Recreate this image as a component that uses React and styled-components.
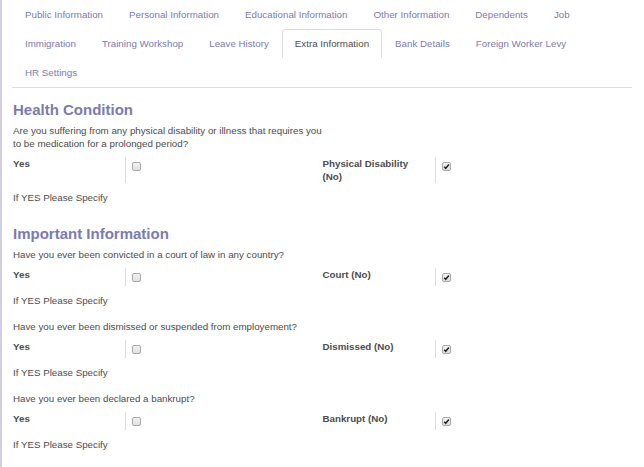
import React from "react";
import styled, { createGlobalStyle } from "styled-components";

const GlobalStyle = createGlobalStyle`
  html, body { margin: 0; padding: 0; background: #fff; }
  body {
    font-family: "Liberation Sans", Arial, sans-serif;
    font-size: 9.75px;
    color: #4c4c4c;
  }
  * { box-sizing: border-box; }
`;

const Page = styled.div`
  border-left: 2px solid #d2cee2;
  min-height: 467px;
  padding: 0 12px 0 11px;
`;

const Nav = styled.ul`
  display: flex;
  flex-wrap: wrap;
  list-style: none;
  margin: 0 0 12px -1px;
  padding: 0;
  border-bottom: 1px solid #dddddd;
`;

const Tab = styled.li`
  padding: 7px 12px;
  line-height: 13px;
  border: 1px solid ${(p) => (p.$active ? "#dddddd" : "transparent")};
  border-bottom-color: transparent;
  border-radius: 3px 3px 0 0;
  color: ${(p) => (p.$active ? "#4c4c4c" : "#7c7bad")};
  background: #fff;
  white-space: nowrap;
`;

const Section = styled.section`
  & + & { margin-top: 20.5px; }
`;

const Heading = styled.h2`
  margin: 0 0 3.5px;
  font-size: 15px;
  line-height: 20px;
  font-weight: bold;
  color: #7c7bad;
`;

const Block = styled.div``;

const Question = styled.div`
  width: 309.5px;
  line-height: 13px;
  margin-bottom: 7.5px;
`;

const Row = styled.div`
  display: grid;
  grid-template-columns: 1fr 1fr;
`;

const Group = styled.div`
  display: grid;
  grid-template-columns: 113px 1fr;
  align-items: stretch;
`;

const Label = styled.div`
  font-weight: bold;
  line-height: 13px;
  min-height: 18px;
  padding: 0 16px 0 0;
  border-right: 1px solid #dddddd;
`;

const Field = styled.div`
  padding: 5px 0 0 6px;
`;

const Specify = styled.div`
  line-height: 13px;
  margin: 7.5px 0 13px;
`;

const Box = styled.svg`
  display: block;
  width: 9px;
  height: 9px;
`;

const Checkbox = ({ checked }) => (
  <Box viewBox="0 0 9 9">
    <defs>
      <linearGradient id={checked ? "gc" : "gu"} x1="0" y1="0" x2="0" y2="1">
        <stop offset="0" stopColor="#f4f4f4" />
        <stop offset="1" stopColor="#dedede" />
      </linearGradient>
    </defs>
    <rect
      x="0.5"
      y="0.5"
      width="8"
      height="8"
      rx="1.5"
      fill={`url(#${checked ? "gc" : "gu"})`}
      stroke="#a9a9a9"
    />
    {checked && (
      <path d="M2.2 4.8 L3.7 6.3 L6.9 2.6" fill="none" stroke="#222" strokeWidth="1.5" />
    )}
  </Box>
);

const tabs = [
  "Public Information",
  "Personal Information",
  "Educational Information",
  "Other Information",
  "Dependents",
  "Job",
  "Immigration",
  "Training Workshop",
  "Leave History",
  "Extra Information",
  "Bank Details",
  "Foreign Worker Levy",
  "HR Settings",
];

const QA = ({ question, right }) => (
  <Block>
    <Question>{question}</Question>
    <Row>
      <Group>
        <Label>Yes</Label>
        <Field>
          <Checkbox />
        </Field>
      </Group>
      <Group>
        <Label>{right}</Label>
        <Field>
          <Checkbox checked />
        </Field>
      </Group>
    </Row>
    <Specify>If YES Please Specify</Specify>
  </Block>
);

export default function App() {
  return (
    <>
      <GlobalStyle />
      <Page>
        <Nav>
          {tabs.map((t) => (
            <Tab key={t} $active={t === "Extra Information"}>
              {t}
            </Tab>
          ))}
        </Nav>
        <Section>
          <Heading>Health Condition</Heading>
          <QA
            question="Are you suffering from any physical disability or illness that requires you to be medication for a prolonged period?"
            right="Physical Disability (No)"
          />
        </Section>
        <Section>
          <Heading>Important Information</Heading>
          <QA
            question="Have you ever been convicted in a court of law in any country?"
            right="Court (No)"
          />
          <QA
            question="Have you ever been dismissed or suspended from employement?"
            right="Dismissed (No)"
          />
          <QA question="Have you ever been declared a bankrupt?" right="Bankrupt (No)" />
        </Section>
      </Page>
    </>
  );
}
